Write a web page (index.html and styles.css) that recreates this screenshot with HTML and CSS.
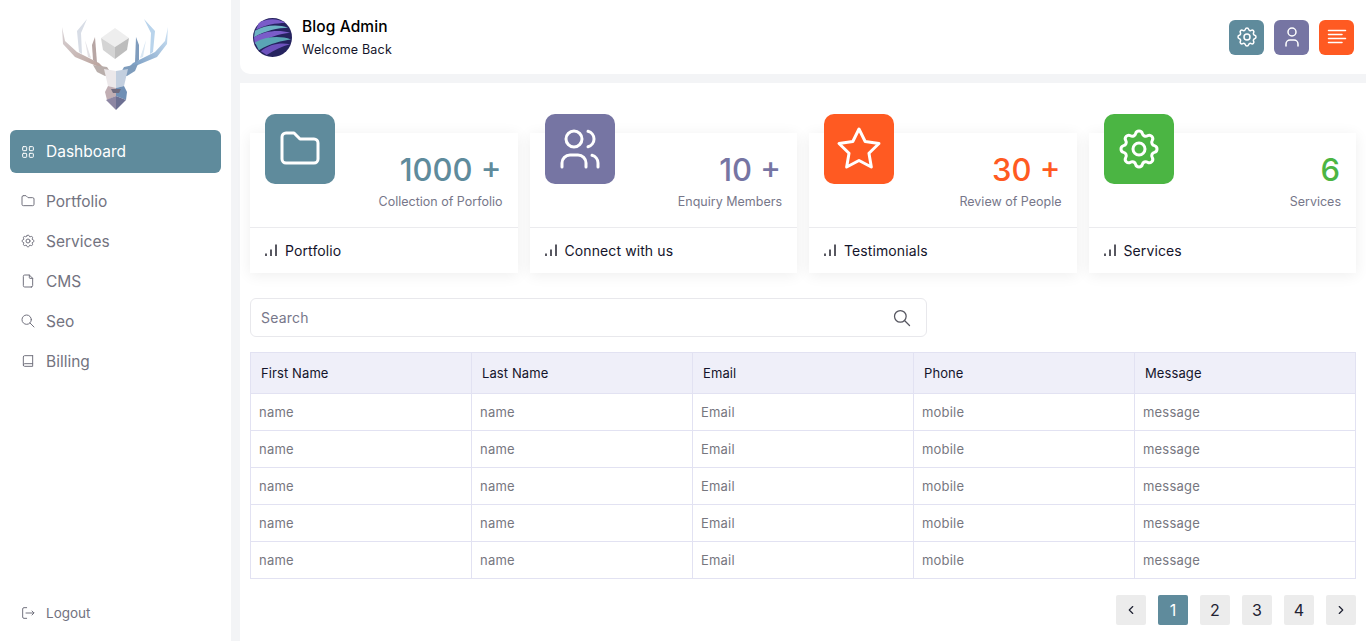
FILE: index.html
```html
<!DOCTYPE html>
<html lang="en">
<head>
<meta charset="utf-8">
<title>Blog Admin</title>
<link rel="stylesheet" href="styles.css">
</head>
<body>
<svg class="sprite" aria-hidden="true">
  <symbol id="i-grid" viewBox="0 0 24 24"><rect x="4" y="4" width="6" height="6" rx="1"/><rect x="14" y="4" width="6" height="6" rx="1"/><rect x="4" y="14" width="6" height="6" rx="1"/><rect x="14" y="14" width="6" height="6" rx="1"/></symbol>
  <symbol id="i-folder" viewBox="0 0 24 24"><path d="M5 4h4l3 3h7a2 2 0 0 1 2 2v8a2 2 0 0 1-2 2H5a2 2 0 0 1-2-2V6a2 2 0 0 1 2-2"/></symbol>
  <symbol id="i-gear" viewBox="0 0 24 24"><path d="M10.325 4.317c.426-1.756 2.924-1.756 3.35 0a1.724 1.724 0 0 0 2.573 1.066c1.543-.94 3.31.826 2.37 2.37a1.724 1.724 0 0 0 1.065 2.572c1.756.426 1.756 2.924 0 3.35a1.724 1.724 0 0 0-1.066 2.573c.94 1.543-.826 3.31-2.37 2.37a1.724 1.724 0 0 0-2.572 1.065c-.426 1.756-2.924 1.756-3.35 0a1.724 1.724 0 0 0-2.573-1.066c-1.543.94-3.31-.826-2.37-2.37a1.724 1.724 0 0 0-1.065-2.572c-1.756-.426-1.756-2.924 0-3.35a1.724 1.724 0 0 0 1.066-2.573c-.94-1.543.826-3.31 2.37-2.37c1 .608 2.296.07 2.572-1.065z"/><circle cx="12" cy="12" r="3"/></symbol>
  <symbol id="i-file" viewBox="0 0 24 24"><path d="M14 3v4a1 1 0 0 0 1 1h4"/><path d="M17 21H7a2 2 0 0 1-2-2V5a2 2 0 0 1 2-2h7l5 5v11a2 2 0 0 1-2 2z"/></symbol>
  <symbol id="i-search" viewBox="0 0 24 24"><circle cx="10" cy="10" r="7"/><path d="M21 21l-6-6"/></symbol>
  <symbol id="i-book" viewBox="0 0 24 24"><path d="M19 4v16H7a2 2 0 0 1-2-2V6a2 2 0 0 1 2-2h12"/><path d="M19 16H7a2 2 0 0 0-2 2"/></symbol>
  <symbol id="i-logout" viewBox="0 0 24 24"><path d="M10 4H6a2 2 0 0 0-2 2v12a2 2 0 0 0 2 2h4"/><path d="M9 12h12l-3-3"/><path d="M18 15l3-3"/></symbol>
  <symbol id="i-user" viewBox="0 0 24 24"><circle cx="12" cy="7" r="4"/><path d="M6 21v-2a4 4 0 0 1 4-4h4a4 4 0 0 1 4 4v2"/></symbol>
  <symbol id="i-users" viewBox="0 0 24 24"><circle cx="9" cy="7" r="4"/><path d="M3 21v-2a4 4 0 0 1 4-4h4a4 4 0 0 1 4 4v2"/><path d="M16 3.13a4 4 0 0 1 0 7.75"/><path d="M21 21v-2a4 4 0 0 0-3-3.85"/></symbol>
  <symbol id="i-star" viewBox="0 0 24 24"><path d="M12 17.75l-6.172 3.245l1.179-6.873l-5-4.867l6.9-1l3.086-6.253l3.086 6.253l6.9 1l-5 4.867l1.179 6.873z"/></symbol>
  <symbol id="i-bars" viewBox="0 0 16 16"><path d="M3 14v-2.5M8 14V7.500M13 14V2.500"/></symbol>
  <symbol id="i-lines" viewBox="0 0 24 24"><path d="M3.500 5.500h17M3.500 9.500h13.500M3.500 13.500h17M3.500 17.500h13.500"/></symbol>
  <symbol id="i-left" viewBox="0 0 24 24"><path d="M15 6l-6 6l6 6"/></symbol>
  <symbol id="i-right" viewBox="0 0 24 24"><path d="M9 6l6 6l-6 6"/></symbol>
</svg>

<div class="page">
  <aside class="sidebar">
    <div class="logo">
      <svg class="deer" viewBox="58 18 116 94" aria-label="Deer logo" role="img">
        <defs>
          <linearGradient id="tanA" x1="0" y1="0" x2="1" y2="1"><stop offset="0" stop-color="#d9d3d6"/><stop offset="1" stop-color="#b79d95"/></linearGradient>
          <linearGradient id="bluA" x1="1" y1="0" x2="0" y2="1"><stop offset="0" stop-color="#cfe4f6"/><stop offset="1" stop-color="#6e93bb"/></linearGradient>
        </defs>
        <polygon points="62,27 65,41 77,52 99,63 107,71 99,67 75,57 63,44" fill="url(#tanA)"/>
        <polygon points="87,19 77,31 79,52 82,54 81,33" fill="#d8dde6"/>
        <polygon points="95,37 92,45 93,60 97,63" fill="#b7a6a4"/>
        <polygon points="85,40 88,57 91,58" fill="#e4e2e6"/>
        <polygon points="168,27 165,41 155,52 133,63 125,71 133,67 157,57 167,44" fill="url(#bluA)"/>
        <polygon points="144,19 155,31 153,52 150,54 151,33" fill="#b9d4ec"/>
        <polygon points="136,37 139,45 139,60 135,63" fill="#7f9cbd"/>
        <polygon points="146,40 143,57 140,58" fill="#dbe8f4"/>
        <polygon points="115,28 129,38 115,47 101,38" fill="#eeeeee"/>
        <polygon points="101,38 115,47 115,59 103,50" fill="#d4d4d4"/>
        <polygon points="129,38 115,47 115,59 127,50" fill="#bdbdbd"/>
        <polygon points="93,65 107,67 113,76 105,76 97,72" fill="#b9aeab"/>
        <polygon points="138,64 124,67 119,76 127,76 135,71" fill="#7e9cbc"/>
        <polygon points="104,69 116,71 116,88 108,86" fill="#ece8ea"/>
        <polygon points="128,69 116,71 116,88 124,86" fill="#c3cfdf"/>
        <polygon points="108,86 116,88 116,96 107,100 105,92" fill="#c1aeb3"/>
        <polygon points="124,86 116,88 116,96 126,100 127,92" fill="#6f8fb5"/>
        <polygon points="111,89 121,89 119,93 113,93" fill="#6f6b7f"/>
        <polygon points="106,100 116,96 116,110" fill="#8d86a3"/>
        <polygon points="126,100 116,96 116,110" fill="#6c6f92"/>
      </svg>
    </div>
    <nav class="nav">
      <a class="nav-item nav-active"><svg class="ico16"><use href="#i-grid"/></svg>Dashboard</a>
      <a class="nav-item"><svg class="ico16"><use href="#i-folder"/></svg>Portfolio</a>
      <a class="nav-item"><svg class="ico16"><use href="#i-gear"/></svg>Services</a>
      <a class="nav-item"><svg class="ico16"><use href="#i-file"/></svg>CMS</a>
      <a class="nav-item"><svg class="ico16"><use href="#i-search"/></svg>Seo</a>
      <a class="nav-item"><svg class="ico16"><use href="#i-book"/></svg>Billing</a>
    </nav>
    <a class="nav-item logout"><svg class="ico16"><use href="#i-logout"/></svg>Logout</a>
  </aside>

  <main class="main">
    <header class="topbar">
      <svg class="avatar" viewBox="0 0 40 40" aria-hidden="true">
        <circle cx="20" cy="20" r="20" fill="#25235f"/>
        <path d="M6 5C14 0 26 0 33 5C24 5 12 7 3 12Z" fill="#7a5cc9"/>
        <path d="M2 13C12 7 26 6 36 10C26 10 12 13 1 20Z" fill="#6db3c4"/>
        <path d="M1 20C12 13 26 12 38 15C28 16 14 20 2 27Z" fill="#7a5cc9"/>
        <path d="M2 25C13 19 28 18 39 22C30 23 18 26 6 33Z" fill="#5aa6b5"/>
        <path d="M8 34C17 27 28 25 38 27C30 29 22 33 14 38Z" fill="#6d52bd"/>
      </svg>
      <div class="brand">
        <div class="brand-name">Blog Admin</div>
        <div class="brand-sub">Welcome Back</div>
      </div>
      <div class="top-actions">
        <button class="top-btn teal"><svg class="ico24"><use href="#i-gear"/></svg></button>
        <button class="top-btn purple"><svg class="ico24"><use href="#i-user"/></svg></button>
        <button class="top-btn orange"><svg class="ico24"><use href="#i-lines"/></svg></button>
      </div>
    </header>

    <section class="content">
      <div class="stats">
        <article class="card">
          <div class="card-top">
            <div class="tile teal"><svg class="ico48"><use href="#i-folder"/></svg></div>
            <div class="figure">
              <div class="num t-teal">1000 +</div>
              <div class="cap">Collection of Porfolio</div>
            </div>
          </div>
          <div class="card-foot"><svg class="ico-bars"><use href="#i-bars"/></svg>Portfolio</div>
        </article>
        <article class="card">
          <div class="card-top">
            <div class="tile purple"><svg class="ico48"><use href="#i-users"/></svg></div>
            <div class="figure">
              <div class="num t-purple">10 +</div>
              <div class="cap">Enquiry Members</div>
            </div>
          </div>
          <div class="card-foot"><svg class="ico-bars"><use href="#i-bars"/></svg>Connect with us</div>
        </article>
        <article class="card">
          <div class="card-top">
            <div class="tile orange"><svg class="ico48"><use href="#i-star"/></svg></div>
            <div class="figure">
              <div class="num t-orange">30 +</div>
              <div class="cap">Review of People</div>
            </div>
          </div>
          <div class="card-foot"><svg class="ico-bars"><use href="#i-bars"/></svg>Testimonials</div>
        </article>
        <article class="card">
          <div class="card-top">
            <div class="tile green"><svg class="ico48"><use href="#i-gear"/></svg></div>
            <div class="figure">
              <div class="num t-green">6</div>
              <div class="cap">Services</div>
            </div>
          </div>
          <div class="card-foot"><svg class="ico-bars"><use href="#i-bars"/></svg>Services</div>
        </article>
      </div>

      <div class="search">
        <span class="search-text">Search</span>
        <svg class="ico-search"><use href="#i-search"/></svg>
      </div>

      <table class="grid">
        <thead>
          <tr><th>First Name</th><th>Last Name</th><th>Email</th><th>Phone</th><th>Message</th></tr>
        </thead>
        <tbody>
          <tr><td>name</td><td>name</td><td>Email</td><td>mobile</td><td>message</td></tr>
          <tr><td>name</td><td>name</td><td>Email</td><td>mobile</td><td>message</td></tr>
          <tr><td>name</td><td>name</td><td>Email</td><td>mobile</td><td>message</td></tr>
          <tr><td>name</td><td>name</td><td>Email</td><td>mobile</td><td>message</td></tr>
          <tr><td>name</td><td>name</td><td>Email</td><td>mobile</td><td>message</td></tr>
        </tbody>
      </table>

      <div class="pager">
        <a class="pg"><svg class="ico14"><use href="#i-left"/></svg></a>
        <a class="pg pg-on">1</a>
        <a class="pg">2</a>
        <a class="pg">3</a>
        <a class="pg">4</a>
        <a class="pg"><svg class="ico14"><use href="#i-right"/></svg></a>
      </div>
    </section>
  </main>
</div>
</body>
</html>
```
FILE: styles.css
```css
* { box-sizing: border-box; }
html, body { margin: 0; height: 100%; }
body {
  background: #f3f4f6;
  font-family: Inter, "Noto Sans", sans-serif;
  color: #111122;
  overflow: hidden;
}
.sprite { display: none; }
svg { fill: none; stroke: currentColor; stroke-linecap: round; stroke-linejoin: round; stroke-width: 1.5; flex: none; }
.deer, .deer *, .avatar, .avatar * { stroke: none; }

.page { display: flex; height: 641px; }

.sidebar {
  width: 231px;
  background: #fff;
  display: flex;
  flex-direction: column;
  padding: 0 10px 8px;
}
.logo { height: 130px; display: flex; justify-content: center; padding-top: 18px; }
.deer { width: 116px; height: 94px; }
.nav { display: flex; flex-direction: column; }
.nav-item {
  height: 40px;
  display: flex;
  align-items: center;
  gap: 10px;
  padding: 0 10px;
  font-size: 15.5px;
  color: #73737f;
}
.nav-active {
  height: 43px;
  margin-bottom: 8px;
  background: #5f8b9c;
  color: #fff;
  border-radius: 6px;
}
.logout { margin-top: auto; font-size: 13.500px; }
.ico16 { width: 16px; height: 16px; stroke-width: 1.5; }
.ico14 { width: 14px; height: 14px; stroke-width: 2; }
.ico24 { width: 24px; height: 24px; }
.ico48 { width: 48px; height: 48px; }

.main { flex: 1; min-width: 0; display: flex; flex-direction: column; margin-left: 9px; gap: 9px; }

.topbar {
  height: 74px;
  background: #fff;
  border-bottom-left-radius: 10px;
  display: flex;
  align-items: center;
  padding: 0 12px 0 13px;
}
.avatar { width: 39px; height: 39px; margin-right: 10px; }
.brand { display: flex; flex-direction: column; gap: 4px; }
.brand-name { font-size: 15.5px; font-weight: 500; color: #000; line-height: 20px; letter-spacing: .1px; }
.brand-sub { font-size: 12.500px; color: #14142b; line-height: 17px; letter-spacing: .2px; }
.top-actions { margin-left: auto; display: flex; gap: 10px; }
.top-btn {
  width: 35px;
  height: 35px;
  border: 0;
  padding: 0;
  border-radius: 6px;
  color: #fff;
  display: flex;
  align-items: center;
  justify-content: center;
}
.teal { background: #5f8b9c; }
.purple { background: #7675a3; }
.orange { background: #ff5a22; }
.green { background: #4bb543; }
.t-teal { color: #5f8b9c; }
.t-purple { color: #7675a3; }
.t-orange { color: #ff5a22; }
.t-green { color: #4bb543; }

.content { flex: 1; background: #fff; padding: 50px 10px 0; display: flex; flex-direction: column; }

.stats { display: grid; grid-template-columns: repeat(4, 1fr); gap: 12px; }
.card { background: #fff; box-shadow: 0 2px 14px rgba(0,0,0,.07); height: 140px; display: flex; flex-direction: column; }
.card-top { height: 95px; border-bottom: 1px solid #ebebee; display: flex; padding: 0 15px; }
.tile {
  width: 70px;
  height: 70px;
  margin-top: -19px;
  border-radius: 10px;
  color: #fff;
  display: flex;
  align-items: center;
  justify-content: center;
}
.figure { margin-left: auto; text-align: right; padding-top: 16px; }
.num { font-size: 31px; font-weight: 500; line-height: 42px; padding-right: 1px; }
.cap { font-size: 12.500px; color: #77778a; line-height: 18px; margin-top: 2px; }
.card-foot { flex: 1; display: flex; align-items: center; gap: 6px; padding-left: 13px; font-size: 14px; color: #14142b; letter-spacing: .1px; padding-bottom: 1px; }
.ico-bars { width: 16px; height: 16px; stroke-width: 1.5; stroke-linecap: butt; color: #22222e; }

.search {
  width: 677px;
  height: 39px;
  margin-top: 25px;
  border: 1px solid #e8e8ec;
  border-radius: 6px;
  display: flex;
  align-items: center;
  padding: 0 14px 0 10px;
  color: #77778a;
  font-size: 14px;
}
.search-text { flex: 1; letter-spacing: .2px; }
.ico-search { width: 20px; height: 20px; color: #55555f; stroke-width: 1.5; }

.grid { width: 100%; margin-top: 15px; border-collapse: collapse; table-layout: fixed; border: 1px solid #e2e2f2; }
.grid th, .grid td { border: 1px solid #e2e2f2; text-align: left; font-weight: 400; }
.grid th { height: 41px; background: #efeff9; padding: 0 10px; font-size: 13px; color: #14142b; letter-spacing: .1px; }
.grid td { height: 37px; padding: 0 8px; font-size: 13px; color: #77777f; letter-spacing: .2px; }

.pager { display: flex; justify-content: flex-end; gap: 12px; margin-top: 16px; }
.pg {
  width: 30px;
  height: 30px;
  border-radius: 2px;
  background: #ececec;
  color: #1f2233;
  font-size: 16px;
  display: flex;
  align-items: center;
  justify-content: center;
}
.pg-on { background: #5f8b9c; color: #fff; }
```
